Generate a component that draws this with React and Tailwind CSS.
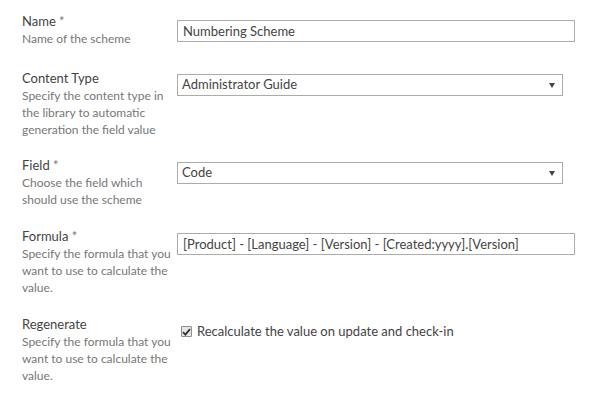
import React from "react";

const font = { fontFamily: 'Lato, "Liberation Sans", sans-serif' };

function Label({ title, required, lines }) {
  return (
    <div className="w-[155px] shrink-0 leading-[17px]">
      <div className="text-[13px] text-[#444]">
        {title}
        {required && <span className="text-[#777]"> *</span>}
      </div>
      {lines.map((l) => (
        <div key={l} className="text-[12px] text-[#777] whitespace-nowrap">
          {l}
        </div>
      ))}
    </div>
  );
}

function Select({ value, className }) {
  return (
    <div
      className={
        "flex items-center justify-between h-[22px] border border-[#ababab] bg-white pl-[4px] pr-[7px] text-[13px] text-[#444] " +
        className
      }
    >
      <span>{value}</span>
      <svg width="6" height="5" viewBox="0 0 6 5">
        <path d="M0 0 L6 0 L3 5 Z" fill="#444" />
      </svg>
    </div>
  );
}

export default function App() {
  return (
    <div className="w-[600px] h-[400px] bg-white pt-[13px] pl-[22px]" style={font}>
      <div className="flex pb-[23px]">
        <Label title="Name" required lines={["Name of the scheme"]} />
        <div className="mt-[7px] w-[398px] h-[22px] border border-[#ababab] pl-[5px] text-[13px] leading-[20px] text-[#444]">
          Numbering Scheme
        </div>
      </div>

      <div className="flex pb-[19px]">
        <Label
          title="Content Type"
          lines={["Specify the content type in", "the library to automatic", "generation the field value"]}
        />
        <Select value="Administrator Guide" className="mt-[4px] w-[386px]" />
      </div>

      <div className="flex pb-[20px]">
        <Label title="Field" required lines={["Choose the field which", "should use the scheme"]} />
        <Select value="Code" className="mt-[5px] w-[386px]" />
      </div>

      <div className="flex pb-[20px]">
        <Label
          title="Formula"
          required
          lines={["Specify the formula that you", "want to use to calculate the", "value."]}
        />
        <div className="mt-[5px] w-[398px] h-[22px] border border-[#ababab] pl-[5px] text-[13px] leading-[20px] text-[#444]">
          [Product] - [Language] - [Version] - [Created:yyyy].[Version]
        </div>
      </div>

      <div className="flex">
        <Label
          title="Regenerate"
          lines={["Specify the formula that you", "want to use to calculate the", "value."]}
        />
        <div className="flex items-center mt-[7px] pl-[4px] gap-[5px] text-[13px] text-[#444] h-[17px]">
          <span className="flex items-center justify-center w-[11px] h-[11px] border border-[#8f8f8f] bg-[#e6e6e6] rounded-[1px]">
            <svg width="9" height="8" viewBox="0 0 9 8">
              <path d="M1 4.2 L3.4 6.6 L8 1.2" fill="none" stroke="#333" strokeWidth="1.8" />
            </svg>
          </span>
          <span>Recalculate the value on update and check-in</span>
        </div>
      </div>
    </div>
  );
}
